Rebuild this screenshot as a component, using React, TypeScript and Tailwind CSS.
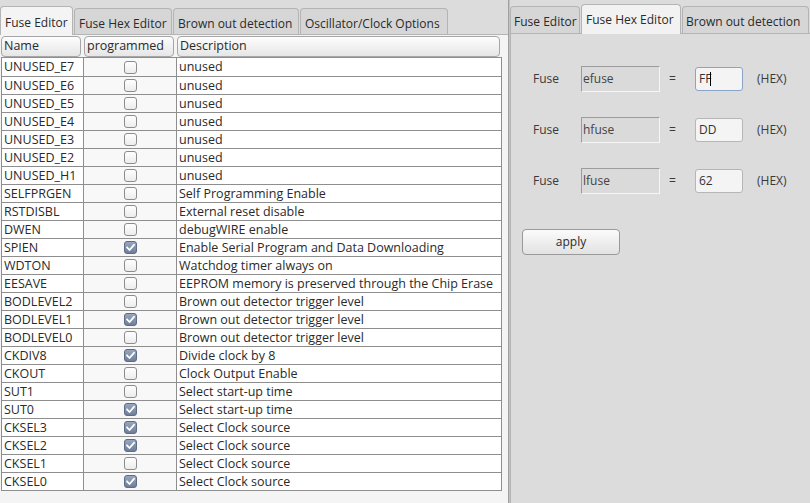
import React from "react";

const rows: [string, boolean, string][] = [
  ["UNUSED_E7", false, "unused"],
  ["UNUSED_E6", false, "unused"],
  ["UNUSED_E5", false, "unused"],
  ["UNUSED_E4", false, "unused"],
  ["UNUSED_E3", false, "unused"],
  ["UNUSED_E2", false, "unused"],
  ["UNUSED_H1", false, "unused"],
  ["SELFPRGEN", false, "Self Programming Enable"],
  ["RSTDISBL", false, "External reset disable"],
  ["DWEN", false, "debugWIRE enable"],
  ["SPIEN", true, "Enable Serial Program and Data Downloading"],
  ["WDTON", false, "Watchdog timer always on"],
  ["EESAVE", false, "EEPROM memory is preserved through the Chip Erase"],
  ["BODLEVEL2", false, "Brown out detector trigger level"],
  ["BODLEVEL1", true, "Brown out detector trigger level"],
  ["BODLEVEL0", false, "Brown out detector trigger level"],
  ["CKDIV8", true, "Divide clock by 8"],
  ["CKOUT", false, "Clock Output Enable"],
  ["SUT1", false, "Select start-up time"],
  ["SUT0", true, "Select start-up time"],
  ["CKSEL3", true, "Select Clock source"],
  ["CKSEL2", true, "Select Clock source"],
  ["CKSEL1", false, "Select Clock source"],
  ["CKSEL0", true, "Select Clock source"],
];

function Check({ on }: { on: boolean }) {
  return (
    <svg width="13" height="13" viewBox="0 0 13 13">
      <defs>
        <linearGradient id="cbOff" x1="0" y1="0" x2="0" y2="1">
          <stop offset="0" stopColor="#ffffff" />
          <stop offset="1" stopColor="#ececec" />
        </linearGradient>
        <linearGradient id="cbOn" x1="0" y1="0" x2="0" y2="1">
          <stop offset="0" stopColor="#9aa8bf" />
          <stop offset="1" stopColor="#6d7d99" />
        </linearGradient>
      </defs>
      <rect
        x="0.5"
        y="0.5"
        width="12"
        height="12"
        rx="2.5"
        fill={on ? "url(#cbOn)" : "url(#cbOff)"}
        stroke={on ? "#5f6d84" : "#8c8c8c"}
      />
      {on && (
        <path d="M3 6.3 L5.5 9 L10 3.8" fill="none" stroke="#ffffff" strokeWidth="1.8" strokeLinecap="round" strokeLinejoin="round" />
      )}
    </svg>
  );
}

function Tab({ label, active, w }: { label: string; active?: boolean; w: string }) {
  return active ? (
    <div
      className={`${w} h-[29px] -mb-px relative z-10 bg-[#f4f4f4] border border-b-0 border-[#b4b4b4] rounded-t-[4px] flex items-center pl-[4px] pt-[3px] text-[#2a2a2a] whitespace-nowrap`}
    >
      {label}
    </div>
  ) : (
    <div
      className={`${w} h-[26px] bg-[#d6d6d6] border border-b-0 border-[#b4b4b4] rounded-t-[4px] flex items-center pl-[4px] pt-[4px] text-[#2a2a2a] whitespace-nowrap`}
    >
      {label}
    </div>
  );
}

function HeaderBtn({ label, w }: { label: string; w: string }) {
  return (
    <div
      className={`${w} h-[21px] rounded-[4px] border border-[#a6a6a6] bg-gradient-to-b from-[#fdfdfd] to-[#e6e6e6] flex items-center pl-[2px] text-[#2a2a2a]`}
    >
      {label}
    </div>
  );
}

function FuseRow({ name, value, focused }: { name: string; value: string; focused?: boolean }) {
  return (
    <div className="flex items-center h-[26px]">
      <div className="w-[48px] text-[#3a3a3a]">Fuse</div>
      <div className="w-[79px] h-[26px] border border-[#9c9c9c] border-r-[#f6f6f6] border-b-[#f6f6f6] bg-[#dadada] flex items-center pl-[1px] text-[#444]">
        {name}
      </div>
      <div className="w-[35px] pl-[9px] text-[#3a3a3a]">=</div>
      <div
        className={`w-[48px] h-[24px] rounded-[3px] border ${
          focused ? "border-[#8aa4c8]" : "border-[#b6b6b6]"
        } bg-[#f4f4f4] flex items-center pl-[3px] text-[#333]`}
      >
        {value}
        {focused && <span className="inline-block w-px h-[14px] bg-black ml-[-1px]" />}
      </div>
      <div className="ml-[14px] text-[#3a3a3a]">(HEX)</div>
    </div>
  );
}

export default function App() {
  return (
    <div
      className="w-[810px] h-[503px] flex bg-[#dcdcdc] text-[12px] overflow-hidden"
      style={{ fontFamily: "'Open Sans', 'Noto Sans', sans-serif" }}
    >
      {/* Left panel */}
      <div className="w-[508px] flex flex-col">
        <div className="h-[34px] flex items-end gap-px pl-0">
          <Tab label="Fuse Editor" active w="w-[73px]" />
          <Tab label="Fuse Hex Editor" w="w-[98px]" />
          <Tab label="Brown out detection" w="w-[126px]" />
          <Tab label="Oscillator/Clock Options" w="w-[148px]" />
        </div>
        <div className="flex-1 bg-[#f4f4f4] border-t border-[#b4b4b4] pt-[1px] pl-px text-[12.5px]">
          <div className="flex gap-[3px] h-[21px]">
            <HeaderBtn label="Name" w="w-[80px]" />
            <HeaderBtn label="programmed" w="w-[90px]" />
            <HeaderBtn label="Description" w="w-[323px]" />
          </div>
          <div className="w-[501px] border border-[#8e8e8e] bg-white">
            {rows.map(([n, c, d], i) => (
              <div key={n} className={`flex h-[18px] ${i > 0 ? "border-t border-[#8e8e8e]" : ""}`}>
                <div className="w-[82px] border-r border-[#8e8e8e] pl-[2px] leading-[17px] text-[#2a2a2a] whitespace-nowrap">
                  {n}
                </div>
                <div className="w-[93px] border-r border-[#8e8e8e] bg-[#f8f8f8] flex items-center justify-center">
                  <Check on={c} />
                </div>
                <div className="flex-1 pl-[2px] leading-[17px] text-[#2a2a2a] whitespace-nowrap">{d}</div>
              </div>
            ))}
          </div>
        </div>
      </div>

      {/* Splitter */}
      <div className="w-[2px] bg-[#c2c2c2] border-l border-[#a0a0a0]" />

      {/* Right panel */}
      <div className="flex-1 flex flex-col">
        <div className="h-[33px] flex items-end gap-px">
          <div className="w-[70px] h-[27px] bg-[#d6d6d6] border border-b-0 border-[#b4b4b4] rounded-t-[4px] flex items-center pl-[3px] pt-[3px] text-[#2a2a2a] whitespace-nowrap">
            Fuse Editor
          </div>
          <div className="w-[100px] h-[30px] -mb-px relative z-10 bg-[#f2f2f2] border border-b-0 border-[#b4b4b4] rounded-t-[4px] flex items-center pl-[4px] pt-[1px] text-[#2a2a2a] whitespace-nowrap">
            Fuse Hex Editor
          </div>
          <div className="w-[127px] h-[27px] bg-[#d6d6d6] border border-b-0 border-[#b4b4b4] rounded-t-[4px] flex items-center pl-[3px] pt-[3px] text-[#2a2a2a] whitespace-nowrap">
            Brown out detection
          </div>
        </div>
        <div className="flex-1 border-t border-l border-[#b4b4b4] bg-[#dcdcdc] pl-[22px] pt-[32px]">
          <div className="flex flex-col gap-[25px]">
            <FuseRow name="efuse" value="FF" focused />
            <FuseRow name="hfuse" value="DD" />
            <FuseRow name="lfuse" value="62" />
          </div>
          <div className="mt-[35px] -ml-[11px] w-[98px] h-[26px] rounded-[4px] border border-[#9a9a9a] bg-gradient-to-b from-[#fbfbfb] to-[#e2e2e2] flex items-center justify-center text-[#2a2a2a]">
            apply
          </div>
        </div>
      </div>
    </div>
  );
}
